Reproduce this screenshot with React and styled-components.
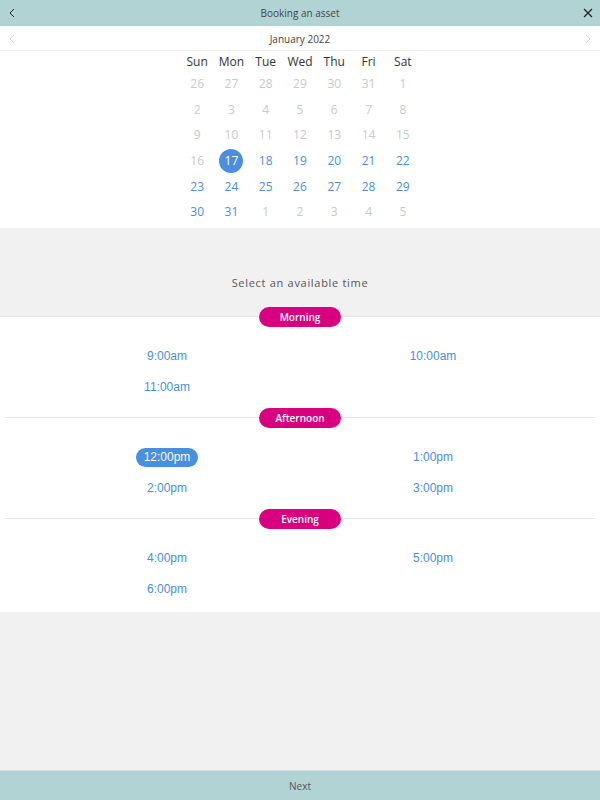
import React, { useState } from "react";
import styled, { createGlobalStyle } from "styled-components";

const GlobalStyle = createGlobalStyle`
  html, body { margin: 0; padding: 0; }
  body {
    font-family: "Open Sans", "Noto Sans", sans-serif;
    background: #f1f1f1;
  }
`;

const Page = styled.div`
  display: flex;
  flex-direction: column;
  min-height: 100vh;
  width: 600px;
`;

const TopBar = styled.div`
  height: 26px;
  background-color: #b2d3d4;
  display: flex;
  align-items: center;
  justify-content: space-between;
  padding: 0 6px;
  box-sizing: border-box;
  font-size: 10px;
  color: #444;
`;

const IconButton = styled.button`
  border: none;
  background: none;
  padding: 0;
  width: 12px;
  height: 12px;
  display: flex;
  align-items: center;
  justify-content: center;
  cursor: pointer;
`;

const Calendar = styled.div`
  background: white;
  padding-bottom: 3px;
`;

const MonthBar = styled.div`
  height: 25px;
  display: flex;
  align-items: center;
  justify-content: space-between;
  padding: 1px 6px 0;
  font-size: 10px;
  color: #444;
  border-bottom: 1px solid #ececec;
  box-sizing: border-box;
`;

const DayGrid = styled.div`
  width: 240px;
  margin: 0 auto;
  display: grid;
  grid-template-columns: repeat(7, 1fr);
  grid-template-rows: 20px;
  grid-auto-rows: 25.6px;
`;

const DayName = styled.div`
  display: flex;
  align-items: center;
  justify-content: center;
  font-size: 12px;
  color: #333;
`;

const DayCell = styled.div`
  display: flex;
  align-items: center;
  justify-content: center;
  font-size: 12px;
`;

const DayNumber = styled.span`
  width: 24px;
  height: 24px;
  border-radius: 50%;
  display: flex;
  align-items: center;
  justify-content: center;
  cursor: ${(p) => (p.$available ? "pointer" : "default")};
  color: ${(p) => (p.$selected ? "white" : p.$available ? "#4a8ee0" : "#c9c9c9")};
  background: ${(p) => (p.$selected ? "#4a8ee0" : "transparent")};
`;

const Prompt = styled.div`
  height: 79px;
  display: flex;
  align-items: flex-end;
  justify-content: center;
  font-size: 11px;
  letter-spacing: 0.7px;
  color: #555;
  padding-bottom: 17px;
  box-sizing: border-box;
`;

const Times = styled.div`
  display: flex;
  flex-direction: column;
  padding-bottom: 2px;
  background: linear-gradient(#f1f1f1 10px, white 10px);
`;

const Divider = styled.div`
  position: relative;
  height: 20px;
  display: flex;
  align-items: center;
  justify-content: center;
  margin: 0 ${(p) => (p.$full ? "0" : "5px")};

  &::before {
    content: "";
    position: absolute;
    left: 0;
    right: 0;
    top: 9px;
    border-top: 1px solid #e6e6e6;
  }
`;

const PeriodPill = styled.span`
  position: relative;
  width: 82px;
  height: 20px;
  border-radius: 10px;
  background: #d8007f;
  color: white;
  font-size: 10px;
  font-weight: 600;
  display: flex;
  align-items: center;
  justify-content: center;
`;

const SlotGrid = styled.div`
  display: grid;
  grid-template-columns: 1fr 1fr;
  grid-auto-rows: 31px;
  padding: 14px 34px 5px;
  background: white;
`;

const Slot = styled.div`
  display: flex;
  align-items: center;
  justify-content: center;
`;

const SlotButton = styled.button`
  border: none;
  font-family: "Liberation Sans", Arial, sans-serif;
  font-size: 12px;
  height: 19px;
  padding: 0 8px;
  border-radius: 10px;
  cursor: pointer;
  color: ${(p) => (p.$selected ? "white" : "#4a8ee0")};
  background: ${(p) => (p.$selected ? "#4a8ee0" : "transparent")};
`;

const Filler = styled.div`
  flex: 1;
  background: #f1f1f1;
`;

const Footer = styled.div`
  height: 30px;
  background-color: #b2d3d4;
  border-top: 1px solid #d4e4e4;
  box-sizing: border-box;
  display: flex;
  align-items: center;
  justify-content: center;
  font-size: 10px;
  color: #555;
`;

const Chevron = ({ dir, color }) => (
  <svg width="8" height="10" viewBox="0 0 8 10">
    <path
      d={dir === "left" ? "M6 1 L2 5 L6 9" : "M2 1 L6 5 L2 9"}
      fill="none"
      stroke={color}
      strokeWidth="1"
    />
  </svg>
);

const Close = () => (
  <svg width="10" height="10" viewBox="0 0 10 10">
    <path d="M1 1 L9 9 M9 1 L1 9" stroke="#222" strokeWidth="1.2" />
  </svg>
);

const dayNames = ["Sun", "Mon", "Tue", "Wed", "Thu", "Fri", "Sat"];

const weeks = [
  [26, 27, 28, 29, 30, 31, 1],
  [2, 3, 4, 5, 6, 7, 8],
  [9, 10, 11, 12, 13, 14, 15],
  [16, 17, 18, 19, 20, 21, 22],
  [23, 24, 25, 26, 27, 28, 29],
  [30, 31, 1, 2, 3, 4, 5],
];

const periods = [
  { name: "Morning", slots: ["9:00am", "10:00am", "11:00am"] },
  { name: "Afternoon", slots: ["12:00pm", "1:00pm", "2:00pm", "3:00pm"] },
  { name: "Evening", slots: ["4:00pm", "5:00pm", "6:00pm"] },
];

const App = () => {
  const [day, setDay] = useState(17);
  const [time, setTime] = useState("12:00pm");

  return (
    <Page>
      <GlobalStyle />
      <TopBar>
        <IconButton>
          <Chevron dir="left" color="#222" />
        </IconButton>
        <span>Booking an asset</span>
        <IconButton>
          <Close />
        </IconButton>
      </TopBar>
      <Calendar>
        <MonthBar>
          <IconButton>
            <Chevron dir="left" color="#d0d0d0" />
          </IconButton>
          <span>January 2022</span>
          <IconButton>
            <Chevron dir="right" color="#d0d0d0" />
          </IconButton>
        </MonthBar>
        <DayGrid>
          {dayNames.map((d) => (
            <DayName key={d}>{d}</DayName>
          ))}
          {weeks.map((week, w) =>
            week.map((n, i) => {
              const inMonth = !((w === 0 && n > 7) || (w === 5 && n < 7));
              const available = inMonth && w >= 3 && n >= 17;
              return (
                <DayCell key={w + "-" + i}>
                  <DayNumber
                    $available={available}
                    $selected={available && n === day}
                    onClick={() => available && setDay(n)}
                  >
                    {n}
                  </DayNumber>
                </DayCell>
              );
            })
          )}
        </DayGrid>
      </Calendar>
      <Prompt>Select an available time</Prompt>
      <Times>
        {periods.map((p, i) => (
          <React.Fragment key={p.name}>
            <Divider $full={i === 0}>
              <PeriodPill>{p.name}</PeriodPill>
            </Divider>
            <SlotGrid>
              {p.slots.map((s) => (
                <Slot key={s}>
                  <SlotButton $selected={s === time} onClick={() => setTime(s)}>
                    {s}
                  </SlotButton>
                </Slot>
              ))}
            </SlotGrid>
          </React.Fragment>
        ))}
      </Times>
      <Filler />
      <Footer>Next</Footer>
    </Page>
  );
};

export default App;
